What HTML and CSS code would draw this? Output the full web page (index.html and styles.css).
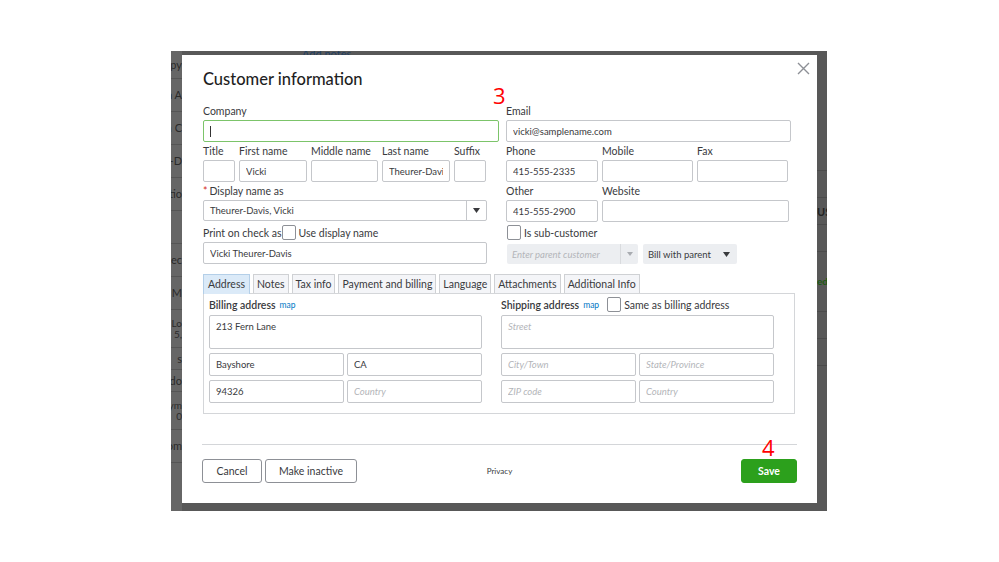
FILE: index.html
```html
<!DOCTYPE html>
<html lang="en">
<head>
<meta charset="utf-8">
<title>Customer information</title>
<link rel="stylesheet" href="styles.css">
</head>
<body>
<div class="stage">
  <div class="under">
    <div class="under-left">
      <div class="urow h1">py</div>
      <div class="urow">a A</div>
      <div class="urow">a C</div>
      <div class="urow">r-D</div>
      <div class="urow">tio</div>
      <div class="urow"></div>
      <div class="urow">ec</div>
      <div class="urow">s M</div>
      <div class="urow two"><span>Lo</span><span>5,</span></div>
      <div class="urow sm">s</div>
      <div class="urow sm">do</div>
      <div class="urow two"><span>ym</span><span>0</span></div>
      <div class="urow">om</div>
    </div>
    <div class="under-mid"><span class="addnotes">Add notes</span></div>
    <div class="under-right">
      <div class="rrow tall"></div>
      <div class="rrow"></div>
      <div class="rrow">US</div>
      <div class="rrow"></div>
      <div class="rrow green">ed</div>
      <div class="rrow"></div>
      <div class="rrow"></div>
    </div>
  </div>

  <div class="modal">
    <button class="close" aria-label="Close">
      <svg width="13" height="13" viewBox="0 0 13 13"><path d="M1 1L12 12M12 1L1 12" stroke="#8d9096" stroke-width="1.4" fill="none"/></svg>
    </button>
    <h1 class="title">Customer information</h1>

    <div class="form-top">
      <div class="field">
        <label class="lbl">Company</label>
        <div class="inp focused"><span class="caret"></span></div>
      </div>
      <div class="field">
        <label class="lbl">Email</label>
        <input class="inp" value="vicki@samplename.com" readonly>
      </div>

      <div class="names">
        <div class="field"><label class="lbl">Title</label><input class="inp" readonly></div>
        <div class="field"><label class="lbl">First name</label><input class="inp" value="Vicki" readonly></div>
        <div class="field"><label class="lbl">Middle name</label><input class="inp" readonly></div>
        <div class="field"><label class="lbl">Last name</label><input class="inp" value="Theurer-Davis" readonly></div>
        <div class="field"><label class="lbl">Suffix</label><input class="inp" readonly></div>
      </div>
      <div class="phones">
        <div class="field"><label class="lbl">Phone</label><input class="inp" value="415-555-2335" readonly></div>
        <div class="field"><label class="lbl">Mobile</label><input class="inp" readonly></div>
        <div class="field"><label class="lbl">Fax</label><input class="inp" readonly></div>
      </div>

      <div class="field display">
        <label class="lbl"><span class="req">*</span>Display name as</label>
        <div class="select">
          <span class="sel-text">Theurer-Davis, Vicki</span>
          <span class="sel-arrow"><svg width="7" height="5" viewBox="0 0 7 5"><path d="M0 0H7L3.5 5Z" fill="#393a3d"/></svg></span>
        </div>
      </div>
      <div class="others">
        <div class="field"><label class="lbl">Other</label><input class="inp" value="415-555-2900" readonly></div>
        <div class="field"><label class="lbl">Website</label><input class="inp" readonly></div>
      </div>

      <div class="field print">
        <div class="check-row"><span class="lbl-inline">Print on check as</span><span class="cb"></span><span class="cb-text">Use display name</span></div>
        <input class="inp" value="Vicki Theurer-Davis" readonly>
      </div>
      <div class="field sub">
        <div class="check-row"><span class="cb first"></span><span class="cb-text">Is sub-customer</span></div>
        <div class="sub-selects">
          <div class="dsel parent">
            <span class="dsel-text ph">Enter parent customer</span>
            <span class="dsel-arrow"><svg width="6" height="4" viewBox="0 0 6 4"><path d="M0 0H6L3 4Z" fill="#a9acb1"/></svg></span>
          </div>
          <div class="dsel bill">
            <span class="dsel-text">Bill with parent</span>
            <span class="dsel-arrow plain"><svg width="7" height="5" viewBox="0 0 7 5"><path d="M0 0H7L3.5 5Z" fill="#393a3d"/></svg></span>
          </div>
        </div>
      </div>
    </div>

    <div class="tabs">
      <span class="tab active">Address</span>
      <span class="tab">Notes</span>
      <span class="tab">Tax info</span>
      <span class="tab">Payment and billing</span>
      <span class="tab">Language</span>
      <span class="tab">Attachments</span>
      <span class="tab">Additional Info</span>
    </div>
    <div class="panel">
      <div class="addr">
        <div class="addr-head"><span class="addr-title">Billing address</span><a class="map">map</a></div>
        <div class="inp area">213 Fern Lane</div>
        <div class="addr-grid">
          <input class="inp" value="Bayshore" readonly>
          <input class="inp" value="CA" readonly>
          <input class="inp" value="94326" readonly>
          <input class="inp" placeholder="Country" readonly>
        </div>
      </div>
      <div class="addr">
        <div class="addr-head"><span class="addr-title">Shipping address</span><a class="map">map</a><span class="cb ship"></span><span class="cb-text">Same as billing address</span></div>
        <div class="inp area ph">Street</div>
        <div class="addr-grid">
          <input class="inp" placeholder="City/Town" readonly>
          <input class="inp" placeholder="State/Province" readonly>
          <input class="inp" placeholder="ZIP code" readonly>
          <input class="inp" placeholder="Country" readonly>
        </div>
      </div>
    </div>

    <div class="divider"></div>
    <div class="footer">
      <div class="left-btns">
        <button class="btn">Cancel</button>
        <button class="btn wide">Make inactive</button>
      </div>
      <span class="privacy">Privacy</span>
      <button class="btn save">Save</button>
    </div>
  </div>

  <span class="anno anno3">3</span>
  <span class="anno anno4">4</span>
</div>
</body>
</html>
```

FILE: styles.css
```css
* { box-sizing: border-box; }
html, body { margin: 0; padding: 0; background: #fff; }
body { font-family: "Lato", "Open Sans", sans-serif; color: #393a3d; }

.stage {
  position: relative;
  margin: 51px 0 0 171px;
  width: 656px;
  height: 460px;
  background: #585858;
  overflow: hidden;
}

.under { display: flex; height: 100%; }
.under-left { width: 11px; background: #666; display: flex; flex-direction: column; overflow: hidden; }
.urow {
  height: 33px;
  border-bottom: 1px solid #555;
  font-size: 11px;
  color: #2a2a2a;
  white-space: nowrap;
  display: flex; align-items: center;
  justify-content: flex-end;
  line-height: 12px;
  overflow: hidden;
  flex: none;
}
.urow.h1 { height: 28px; }
.urow.two { height: 38px; flex-direction: column; align-items: flex-end; justify-content: center; font-size: 10px; line-height: 11px; }
.urow.sm { height: 22px; }
.under-mid { flex: 1; position: relative; }
.addnotes { display: block; margin: -4px 0 0 120px; font-size: 11px; color: #1f3f63; }
.under-right { width: 10px; display: flex; flex-direction: column; overflow: hidden; }
.rrow { height: 27px; border-bottom: 1px solid #4b4b4b; font-size: 11px; font-weight: bold; color: #222; white-space: nowrap; display: flex; align-items: center; line-height: 11px; flex: none; }
.rrow.tall { height: 120px; }
.rrow.green { color: #1d5a12; font-size: 10px; height: 60px; }

.modal {
  position: absolute;
  left: 11px;
  top: 4px;
  width: 635px;
  height: 448px;
  background: #fff;
  padding: 14px 20px 0 21px;
}
.close {
  position: absolute; top: 7px; right: 7px;
  border: 0; background: none; padding: 0; width: 13px; height: 13px; display: block;
}
.close svg { display: block; }
.title { margin: 0 0 15px; font-size: 16.5px; line-height: 20px; font-weight: 500; color: #1f1f1f; }

.form-top {
  display: grid;
  grid-template-columns: 296px 285px;
  column-gap: 7px;
  row-gap: 2px;
}
.field { display: flex; flex-direction: column; }
.lbl { font-size: 10.5px; line-height: 14px; margin-bottom: 2px; color: #393a3d; white-space: nowrap; }
.req { color: #d52b1e; margin-right: 2px; }
.inp {
  display: block;
  width: 100%;
  height: 22px;
  border: 1px solid #c5c7cb;
  border-radius: 2px;
  padding: 0 6px;
  font: 9.5px "Lato", "Open Sans", sans-serif;
  color: #393a3d;
  background: #fff;
  outline: none;
}
.inp::placeholder { font-style: italic; color: #b3b5b9; }
.inp.focused { border-color: #7cc46a; display: flex; align-items: center; padding-left: 6px; }
.caret { width: 1px; height: 11px; background: #333; }

.names { display: grid; grid-template-columns: 32px 68px 67px 68px 32px; column-gap: 4px; }
.phones { display: grid; grid-template-columns: 92px 91px 91px; column-gap: 4px; }
.others { display: grid; grid-template-columns: 92px 187px; column-gap: 4px; }
.display { width: 284px; }
.print { width: 284px; }

.select {
  height: 21px; border: 1px solid #c5c7cb; border-radius: 2px;
  display: flex; align-items: stretch; font-size: 9.5px;
}
.sel-text { flex: 1; display: flex; align-items: center; padding-left: 6px; }
.sel-arrow { width: 20px; border-left: 1px solid #c5c7cb; display: flex; align-items: center; justify-content: center; }

.check-row { display: flex; align-items: center; height: 15px; margin: 1px 0 2px; font-size: 10.5px; white-space: nowrap; }
.cb { width: 14px; height: 15px; border: 1px solid #8d9096; border-radius: 2px; background: #fff; margin: 0 3px 0 0; flex: none; }
.cb.first { margin-left: 1px; }
.cb-text { font-size: 10.5px; }

.sub-selects { display: flex; gap: 5px; margin-top: 2px; padding-left: 1px; }
.dsel { height: 20px; background: #eceef1; border-radius: 2px; display: flex; align-items: stretch; font-size: 9.5px; }
.dsel.parent { width: 131px; }
.dsel.bill { width: 94px; }
.dsel-text { flex: 1; display: flex; align-items: center; padding-left: 5px; white-space: nowrap; color: #393a3d; }
.dsel-text.ph { font-style: italic; color: #b3b5b9; }
.dsel-arrow { width: 18px; border-left: 1px solid #d9dbde; display: flex; align-items: center; justify-content: center; }
.dsel-arrow.plain { border-left: 0; width: 22px; }

.tabs { display: flex; gap: 3px; margin-top: 10px; height: 19px; position: relative; z-index: 1; }
.tab {
  height: 19px; padding: 0 3px; border: 1px solid #cfd1d4; border-bottom: 0;
  background: #f4f5f8; font-size: 10.5px; line-height: 18px; white-space: nowrap;
}
.tab.active { background: #dbeaf8; border-color: #b4cfe8; height: 20px; padding: 0 4px; }

.panel {
  width: 592px; height: 121px;
  border: 1px solid #d4d6d9;
  padding: 2px 20px 0 5px;
  display: grid; grid-template-columns: 273px 273px; column-gap: 19px; align-content: start;
}
.addr { display: flex; flex-direction: column; }
.addr-head { height: 17px; display: flex; align-items: center; font-size: 10.5px; white-space: nowrap; margin-bottom: 2px; }
.addr-title { font-weight: 600; }
.map { color: #0077c5; font-size: 8.5px; margin-left: 4px; }
.cb.ship { margin-left: 8px; }
.inp.area { height: 34px; padding-top: 5px; line-height: 12px; }
.inp.area.ph { font-style: italic; color: #b3b5b9; }
.addr-grid { display: grid; grid-template-columns: 135px 135px; gap: 4px 3px; margin-top: 4px; }
.addr-grid .inp { height: 23px; }

.divider { height: 1px; background: #d4d6d9; margin: 30px 0 0 -1px; width: 595px; }
.footer { display: grid; grid-template-columns: 1fr auto 1fr; align-items: center; margin: 14px 0 0 -1px; width: 595px; }
.left-btns { display: flex; gap: 3px; }
.btn {
  height: 24px; border: 1px solid #8d9096; border-radius: 3px; background: #fff;
  font: 10.5px "Lato", "Open Sans", sans-serif; color: #393a3d; padding: 0; width: 60px;
}
.btn.wide { width: 92px; }
.privacy { font-size: 8px; color: #393a3d; }
.btn.save { justify-self: end; width: 56px; background: #2ca01c; border-color: #2ca01c; color: #fff; font-weight: 700; }

.anno { position: absolute; color: #f00; font-family: "Open Sans", sans-serif; font-size: 22px; line-height: 22px; }
.anno3 { left: 322px; top: 33px; }
.anno4 { left: 591px; top: 385px; }
```
